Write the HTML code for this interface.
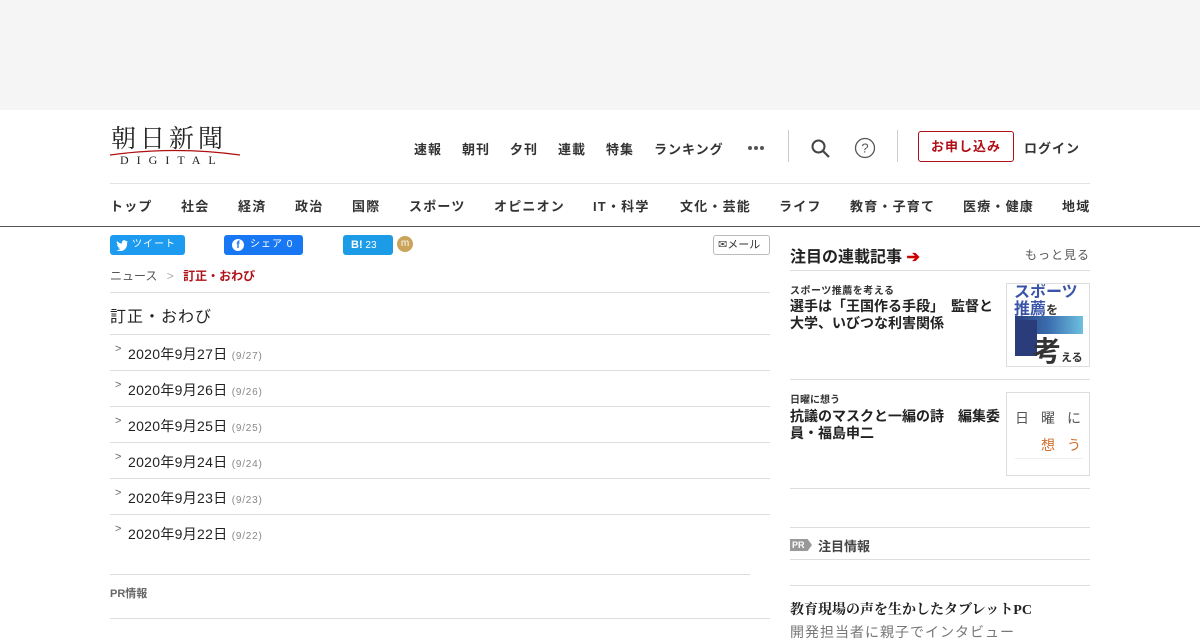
<!DOCTYPE html>
<html><head><meta charset="utf-8"><style>
*{margin:0;padding:0;box-sizing:border-box}
body{width:1200px;height:630px;overflow:hidden;background:#fff;font-family:"Liberation Sans","Noto Sans CJK JP",sans-serif;color:#333;position:relative}
.a{position:absolute;white-space:nowrap}
.hl{position:absolute;height:1px;background:#ddd}
.nav1{font-size:13px;font-weight:bold;color:#333;top:139px;letter-spacing:1px}
.nav2{font-size:13px;font-weight:bold;color:#333;top:196px;letter-spacing:1.2px}
.row{position:absolute;left:110px;width:660px;height:36px;border-bottom:1px solid #ddd;font-size:14px;color:#222}
.row span.c{position:absolute;left:5px;top:8px;color:#666;font-size:11px}
.row span.t{position:absolute;left:18px;top:9px;letter-spacing:.3px}
.row small{font-size:10px;color:#888;letter-spacing:.8px}
</style></head><body>
<div class="a" style="left:0;top:0;width:1200px;height:110px;background:#f5f5f5"></div>
<!-- logo -->
<div class="a" style="left:111px;top:122px;font-family:'Noto Serif CJK SC',serif;font-size:25px;letter-spacing:4px;color:#222;line-height:30px;transform:scaleX(1.0)">朝日新聞</div>
<svg class="a" style="left:108px;top:148px" width="135" height="8"><path d="M2 7 Q67 -2 132 7" stroke="#b01010" stroke-width="1.2" fill="none"/></svg>
<div class="a" style="left:120px;top:153px;font-family:'Liberation Serif',serif;font-size:12px;letter-spacing:8px;color:#222">DIGITAL</div>
<div class="a nav1" style="left:414px">速報</div>
<div class="a nav1" style="left:462px">朝刊</div>
<div class="a nav1" style="left:510px">夕刊</div>
<div class="a nav1" style="left:558px">連載</div>
<div class="a nav1" style="left:606px">特集</div>
<div class="a nav1" style="left:654px">ランキング</div>
<svg class="a" style="left:747px;top:145px" width="20" height="6"><circle cx="3" cy="3" r="2" fill="#555"/><circle cx="9" cy="3" r="2" fill="#555"/><circle cx="15" cy="3" r="2" fill="#555"/></svg>
<div class="a" style="left:788px;top:130px;width:1px;height:32px;background:#ccc"></div>
<svg class="a" style="left:810px;top:138px" width="22" height="22"><circle cx="8.5" cy="8.5" r="6" stroke="#444" stroke-width="2" fill="none"/><path d="M13 13 L19 19" stroke="#444" stroke-width="2.2"/></svg>
<svg class="a" style="left:854px;top:137px" width="22" height="22"><circle cx="11" cy="11" r="9.5" stroke="#555" stroke-width="1.3" fill="none"/><text x="11" y="15.5" text-anchor="middle" font-size="13" fill="#555" font-family="Liberation Sans">?</text></svg>
<div class="a" style="left:897px;top:130px;width:1px;height:32px;background:#ccc"></div>
<div class="a" style="left:918px;top:131px;width:96px;height:31px;border:1px solid #b01018;border-radius:3px;color:#b01018;font-size:13px;font-weight:bold;text-align:center;line-height:29px;letter-spacing:1px">お申し込み</div>
<div class="a" style="left:1024px;top:138px;font-size:13px;font-weight:bold;color:#333;letter-spacing:1px">ログイン</div>
<div class="hl" style="left:110px;top:183px;width:980px;background:#e3e3e3"></div>
<div class="a nav2" style="left:110px">トップ</div>
<div class="a nav2" style="left:181px">社会</div>
<div class="a nav2" style="left:238px">経済</div>
<div class="a nav2" style="left:295px">政治</div>
<div class="a nav2" style="left:352px">国際</div>
<div class="a nav2" style="left:409px">スポーツ</div>
<div class="a nav2" style="left:494px">オピニオン</div>
<div class="a nav2" style="left:593px">IT・科学</div>
<div class="a nav2" style="left:680px">文化・芸能</div>
<div class="a nav2" style="left:779px">ライフ</div>
<div class="a nav2" style="left:850px">教育・子育て</div>
<div class="a nav2" style="left:963px">医療・健康</div>
<div class="a nav2" style="left:1062px">地域</div>
<div class="a" style="left:0;top:226px;width:1200px;height:1px;background:#555"></div>
<!-- share -->
<div class="a" style="left:110px;top:235px;width:75px;height:20px;background:#1d9bf0;border-radius:3px;color:#fff;font-size:10px;line-height:20px;padding-left:22px;letter-spacing:1px">ツイート</div>
<svg class="a" style="left:116px;top:239px" width="13" height="12"><path d="M12 2 L10.5 2.5 Q9 0.5 7 1.5 Q5.5 2.5 6 4.5 Q3 4.5 1 2 Q0 4.5 2.3 6 L1 5.8 Q1.5 8 3.5 8.5 L2 8.8 Q3 10 4.5 10 Q2.5 11.5 0 11 Q6 14 10 9 Q11.5 6 11 3.5 Z" fill="#fff"/></svg>
<div class="a" style="left:224px;top:235px;width:79px;height:20px;background:#1877f2;border-radius:3px;color:#fff;font-size:10px;line-height:20px;padding-left:26px;letter-spacing:1px">シェア 0</div>
<div class="a" style="left:232px;top:239px;width:12px;height:12px;border-radius:50%;background:#fff;color:#1877f2;font-size:10px;font-weight:bold;line-height:13px;text-align:center">f</div>
<div class="a" style="left:343px;top:235px;width:50px;height:20px;background:#1c9be6;border-radius:3px;color:#fff;font-size:10px;line-height:20px;padding-left:8px"><b style="font-size:11px">B!</b> 23</div>
<div class="a" style="left:397px;top:236px;width:16px;height:16px;border-radius:50%;background:#c9a45a;color:#fff;font-size:10px;text-align:center;line-height:15px">m</div>
<div class="a" style="left:713px;top:235px;width:57px;height:20px;border:1px solid #bbb;border-radius:3px;font-size:11px;line-height:18px;padding-left:4px;color:#333">✉メール</div>
<div class="a" style="left:110px;top:267px;font-size:12px;color:#555">ニュース <span style="color:#aaa;margin:0 6px">&gt;</span> <b style="color:#b01018">訂正・おわび</b></div>
<div class="hl" style="left:110px;top:292px;width:660px"></div>
<div class="a" style="left:110px;top:303px;font-size:16px;color:#222;letter-spacing:1px">訂正・おわび</div>
<div class="hl" style="left:110px;top:334px;width:660px"></div>
<div class="row" style="top:335px"><span class="c">&gt;</span><span class="t">2020年9月27日 <small>(9/27)</small></span></div>
<div class="row" style="top:371px"><span class="c">&gt;</span><span class="t">2020年9月26日 <small>(9/26)</small></span></div>
<div class="row" style="top:407px"><span class="c">&gt;</span><span class="t">2020年9月25日 <small>(9/25)</small></span></div>
<div class="row" style="top:443px"><span class="c">&gt;</span><span class="t">2020年9月24日 <small>(9/24)</small></span></div>
<div class="row" style="top:479px"><span class="c">&gt;</span><span class="t">2020年9月23日 <small>(9/23)</small></span></div>
<div class="row" style="top:515px;border:none"><span class="c">&gt;</span><span class="t">2020年9月22日 <small>(9/22)</small></span></div>
<div class="hl" style="left:110px;top:574px;width:640px"></div>
<div class="a" style="left:110px;top:585px;font-size:11px;font-weight:bold;color:#666">PR情報</div>
<div class="hl" style="left:110px;top:618px;width:660px"></div>
<!-- sidebar -->
<div class="a" style="left:790px;top:243px;font-size:16px;font-weight:bold;color:#222">注目の連載記事 <span style="color:#c00">➔</span></div>
<div class="a" style="left:1025px;top:246px;font-size:12px;color:#555;letter-spacing:1px">もっと見る</div>
<div class="hl" style="left:790px;top:270px;width:300px"></div>
<div class="a" style="left:790px;top:282px;font-size:10px;font-weight:bold;color:#333;letter-spacing:.5px">スポーツ推薦を考える</div>
<div class="a" style="left:790px;top:298px;font-size:14px;font-weight:bold;color:#222;line-height:17px">選手は「王国作る手段」　監督と<br>大学、いびつな利害関係</div>
<div class="a" style="left:1006px;top:283px;width:84px;height:84px;border:1px solid #ddd;overflow:hidden">
<div class="a" style="left:8px;top:32px;width:68px;height:18px;background:linear-gradient(90deg,#2a3d7a,#3b6fb0,#6ec0e0)"></div>
<div class="a" style="left:8px;top:36px;width:22px;height:36px;background:#2a3d7a"></div>
<div class="a" style="left:7px;top:0px;font-size:16px;font-weight:bold;color:#3a55a8;line-height:17px">スポーツ<br>推薦<span style="font-size:12px;color:#333">を</span></div>
<div class="a" style="left:26px;top:46px;font-size:28px;font-weight:bold;color:#333">考<span style="font-size:11px">える</span></div>
</div>
<div class="hl" style="left:790px;top:379px;width:300px"></div>
<div class="a" style="left:790px;top:391px;font-size:10px;font-weight:bold;color:#333">日曜に想う</div>
<div class="a" style="left:790px;top:408px;font-size:14px;font-weight:bold;color:#222;line-height:17px">抗議のマスクと一編の詩　編集委<br>員・福島申二</div>
<div class="a" style="left:1006px;top:392px;width:84px;height:84px;border:1px solid #ddd">
<div class="a" style="left:8px;top:15px;font-size:14px;color:#555;letter-spacing:12px">日曜に</div>
<div class="a" style="left:34px;top:42px;font-size:14px;color:#d07030;letter-spacing:12px">想う</div>
<div class="a" style="left:8px;top:65px;width:68px;height:1px;background:#eee"></div>
</div>
<div class="hl" style="left:790px;top:488px;width:300px"></div>
<div class="hl" style="left:790px;top:527px;width:300px"></div>
<div class="a" style="left:790px;top:539px;width:22px;height:12px;background:#999;color:#fff;font-size:9px;font-weight:bold;line-height:12px;padding-left:2px;clip-path:polygon(0 0,80% 0,100% 50%,80% 100%,0 100%)">PR</div>
<div class="a" style="left:818px;top:536px;font-size:13px;font-weight:bold;color:#444">注目情報</div>
<div class="hl" style="left:790px;top:559px;width:300px"></div>
<div class="hl" style="left:790px;top:585px;width:300px"></div>
<div class="a" style="left:790px;top:599px;font-size:14px;font-weight:bold;color:#222;font-family:'Liberation Serif','Noto Serif CJK SC',serif">教育現場の声を生かしたタブレットPC</div>
<div class="a" style="left:790px;top:622px;font-size:14px;color:#777;letter-spacing:1px">開発担当者に親子でインタビュー</div>
</body></html>
